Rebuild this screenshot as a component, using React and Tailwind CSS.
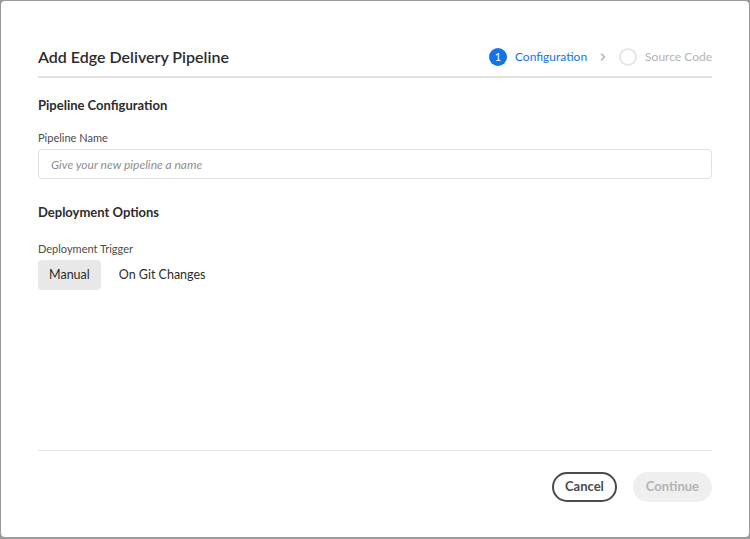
import React from "react";

function Stepper() {
  return (
    <div className="flex items-center text-[12px]">
      <div className="flex items-center gap-[8px]">
        <span className="flex h-[18px] w-[18px] items-center justify-center rounded-full bg-[#1473e6] text-[11px] text-white">
          1
        </span>
        <span className="text-[#1473e6]">Configuration</span>
      </div>
      <svg className="mx-[11px]" width="10" height="10" viewBox="0 0 10 10" fill="none">
        <path d="M3.5 2 L6.5 5 L3.5 8" stroke="#b3b3b3" strokeWidth="1.5" strokeLinecap="round" strokeLinejoin="round" />
      </svg>
      <div className="flex items-center gap-[8px]">
        <span className="h-[18px] w-[18px] rounded-full border-2 border-[#e6e6e6]" />
        <span className="text-[#b3b3b3]">Source Code</span>
      </div>
    </div>
  );
}

export default function App() {
  return (
    <div
      className="h-[539px] w-[750px] bg-[#9a9a9a] pl-px pt-px"
      style={{ fontFamily: "Lato, 'Noto Sans', sans-serif" }}
    >
      <div className="flex h-[536px] w-[748px] flex-col rounded-[4px] bg-white px-[37px]">
        <div className="flex items-center justify-between border-b-2 border-[#e3e3e3] pt-[44px] pb-[7px]">
          <h1 className="text-[16px] font-semibold text-[#2c2c2c]">Add Edge Delivery Pipeline</h1>
          <Stepper />
        </div>

        <h2 className="mt-[18px] text-[13px] font-bold text-[#2c2c2c]">Pipeline Configuration</h2>
        <label className="mt-[14px] text-[11px] text-[#4b4b4b]">Pipeline Name</label>
        <input
          className="mt-[3px] h-[30px] w-full rounded-[4px] border border-[#e1e1e1] px-[12px] text-[12px] italic placeholder:text-[#8e8e8e] outline-none"
          placeholder="Give your new pipeline a name"
        />

        <h2 className="mt-[24px] text-[13px] font-bold text-[#2c2c2c]">Deployment Options</h2>
        <label className="mt-[18px] text-[11px] text-[#4b4b4b]">Deployment Trigger</label>
        <div className="mt-[3px] flex items-center gap-[6px] text-[12.5px] text-[#2c2c2c]">
          <button className="h-[30px] rounded-[4px] bg-[#e8e8e8] px-[11px]">Manual</button>
          <button className="h-[30px] px-[12px]">On Git Changes</button>
        </div>

        <div className="flex-1" />
        <div className="border-t border-[#e3e3e3]" />
        <div className="flex justify-end gap-[16px] pt-[21px] pb-[35px]">
          <button className="h-[30px] rounded-full border-2 border-[#4b4b4b] px-[11px] text-[13px] font-bold text-[#4b4b4b]">
            Cancel
          </button>
          <button className="h-[30px] rounded-full bg-[#efefef] px-[13px] text-[13px] font-bold text-[#b3b3b3]">
            Continue
          </button>
        </div>
      </div>
    </div>
  );
}
